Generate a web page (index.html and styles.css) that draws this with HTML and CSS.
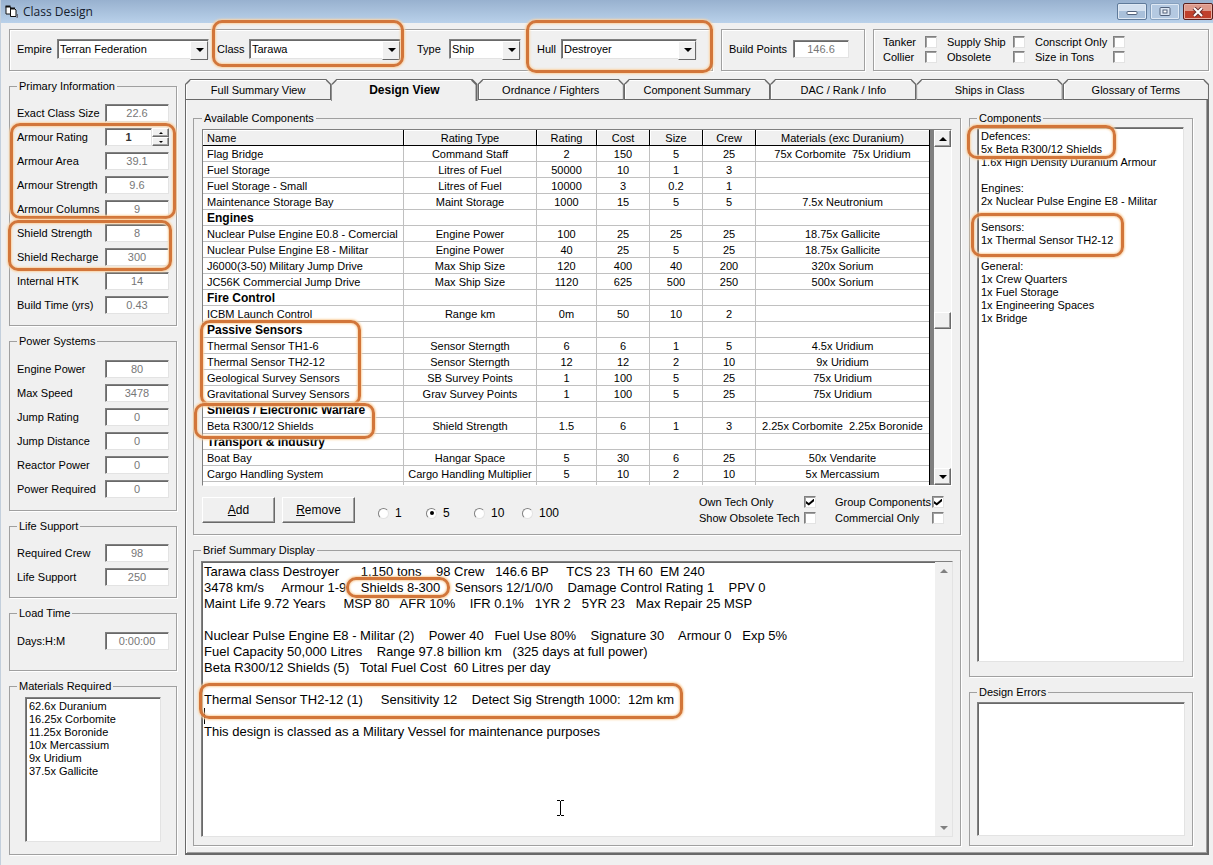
FILE: index.html
```html
<!DOCTYPE html>
<html lang="en">
<head>
<meta charset="utf-8">
<title>Class Design</title>
<link rel="stylesheet" href="styles.css">
</head>
<body>

<header class="titlebar">
  <svg class="app-icon" width="13" height="13" viewBox="0 0 13 13">
    <path d="M1 1.5h4l1 1.500v6H1z" fill="#fff" stroke="#111"/>
    <path d="M5.500 3.500h4l1.500 1.500v6.500H5.500z" fill="#fff" stroke="#111"/>
    <path d="M0.500 1.500h5M5 3.500h5" stroke="#111" stroke-width="2"/>
    <path d="M12.500 9v3.500h-1" stroke="#667" fill="none"/>
  </svg>
  <h1>Class Design</h1>
  <div class="window-buttons">
    <button class="win-btn" aria-label="Minimize">
      <svg width="12" height="9" viewBox="0 0 12 9"><rect x="1" y="4.500" width="10" height="3" rx="1" fill="#fff" stroke="#50607a"/></svg>
    </button>
    <button class="win-btn dim" aria-label="Maximize">
      <svg width="12" height="9" viewBox="0 0 12 9"><rect x="1" y="0.500" width="10" height="8" rx="1" fill="#dce6f2" stroke="#50607a"/><rect x="4" y="3" width="4" height="3" fill="#fff" stroke="#50607a"/></svg>
    </button>
    <button class="win-btn close" aria-label="Close">
      <svg width="12" height="10" viewBox="0 0 12 10"><path d="M2 1l8 8M10 1l-8 8" stroke="#6a3030" stroke-width="4"/><path d="M2 1l8 8M10 1l-8 8" stroke="#fff" stroke-width="2"/></svg>
    </button>
  </div>
</header>

<div class="topbar">
  <div class="frame class-bar">
    <div class="field field-empire">
      <label for="empire">Empire</label>
      <span class="combo"><select id="empire"><option>Terran Federation</option></select></span>
    </div>
    <div class="field field-class">
      <label for="class">Class</label>
      <span class="combo"><select id="class"><option>Tarawa</option></select></span>
      <i class="mark mark-class"></i>
    </div>
    <div class="field field-type">
      <label for="type">Type</label>
      <span class="combo"><select id="type"><option>Ship</option></select></span>
    </div>
    <div class="field field-hull">
      <label for="hull">Hull</label>
      <span class="combo"><select id="hull"><option>Destroyer</option></select></span>
      <i class="mark mark-hull"></i>
    </div>
  </div>
  <div class="frame points-bar">
    <label for="points">Build Points</label>
    <input type="text" class="value" id="points" value="146.6" readonly>
  </div>
  <div class="frame flags-bar">
    <label class="check">Tanker <input type="checkbox"></label>
    <label class="check">Supply Ship <input type="checkbox"></label>
    <label class="check">Conscript Only <input type="checkbox"></label>
    <label class="check">Collier <input type="checkbox"></label>
    <label class="check">Obsolete <input type="checkbox"></label>
    <label class="check">Size in Tons <input type="checkbox"></label>
  </div>
</div>

<main class="main">
  <aside class="sidebar">
    <fieldset class="primary">
      <legend>Primary Information</legend>
      <div class="row"><label for="size">Exact Class Size</label><input type="text" class="value" id="size" value="22.6" readonly></div>
      <div class="group">
        <div class="row">
          <label for="armour">Armour Rating</label>
          <div class="spinner">
            <input type="text" class="value strong" id="armour" value="1">
            <div class="spin-buttons">
              <button class="arrow up small" aria-label="Increase armour"></button>
              <button class="arrow down small" aria-label="Decrease armour"></button>
            </div>
          </div>
        </div>
        <div class="row"><label for="area">Armour Area</label><input type="text" class="value" id="area" value="39.1" readonly></div>
        <div class="row"><label for="astrength">Armour Strength</label><input type="text" class="value" id="astrength" value="9.6" readonly></div>
        <div class="row"><label for="columns">Armour Columns</label><input type="text" class="value" id="columns" value="9" readonly></div>
        <i class="mark mark-armour"></i>
      </div>
      <div class="group">
        <div class="row"><label for="sstrength">Shield Strength</label><input type="text" class="value" id="sstrength" value="8" readonly></div>
        <div class="row"><label for="recharge">Shield Recharge</label><input type="text" class="value" id="recharge" value="300" readonly></div>
        <i class="mark mark-shield"></i>
      </div>
      <div class="row"><label for="htk">Internal HTK</label><input type="text" class="value" id="htk" value="14" readonly></div>
      <div class="row"><label for="build">Build Time (yrs)</label><input type="text" class="value" id="build" value="0.43" readonly></div>
    </fieldset>

    <fieldset class="power">
      <legend>Power Systems</legend>
      <div class="row"><label for="epower">Engine Power</label><input type="text" class="value" id="epower" value="80" readonly></div>
      <div class="row"><label for="speed">Max Speed</label><input type="text" class="value" id="speed" value="3478" readonly></div>
      <div class="row"><label for="jrating">Jump Rating</label><input type="text" class="value" id="jrating" value="0" readonly></div>
      <div class="row"><label for="jdist">Jump Distance</label><input type="text" class="value" id="jdist" value="0" readonly></div>
      <div class="row"><label for="reactor">Reactor Power</label><input type="text" class="value" id="reactor" value="0" readonly></div>
      <div class="row"><label for="required">Power Required</label><input type="text" class="value" id="required" value="0" readonly></div>
    </fieldset>

    <fieldset class="life">
      <legend>Life Support</legend>
      <div class="row"><label for="crew">Required Crew</label><input type="text" class="value" id="crew" value="98" readonly></div>
      <div class="row"><label for="life">Life Support</label><input type="text" class="value" id="life" value="250" readonly></div>
    </fieldset>

    <fieldset class="load">
      <legend>Load Time</legend>
      <div class="row"><label for="days">Days:H:M</label><input type="text" class="value" id="days" value="0:00:00" readonly></div>
    </fieldset>

    <fieldset class="materials">
      <legend>Materials Required</legend>
      <ul class="listbox">
        <li>62.6x Duranium</li>
        <li>16.25x Corbomite</li>
        <li>11.25x Boronide</li>
        <li>10x Mercassium</li>
        <li>9x Uridium</li>
        <li>37.5x Gallicite</li>
      </ul>
    </fieldset>
  </aside>

  <section class="tabs">
    <nav class="tab-row">
      <button class="tab"><span>Full Summary View</span></button>
      <button class="tab active"><span>Design View</span></button>
      <button class="tab"><span>Ordnance / Fighters</span></button>
      <button class="tab"><span>Component Summary</span></button>
      <button class="tab"><span>DAC / Rank / Info</span></button>
      <button class="tab"><span>Ships in Class</span></button>
      <button class="tab"><span>Glossary of Terms</span></button>
    </nav>
    <div class="panel">
      <div class="column">
        <fieldset class="available">
          <legend>Available Components</legend>
          <div class="grid-box">
            <table>
              <colgroup>
                <col class="c-name"><col class="c-type"><col class="c-rating"><col class="c-num"><col class="c-num"><col class="c-num"><col>
              </colgroup>
              <thead>
                <tr><th>Name</th><th>Rating Type</th><th>Rating</th><th>Cost</th><th>Size</th><th>Crew</th><th>Materials (exc Duranium)</th></tr>
              </thead>
              <tbody>
                <tr><td>Flag Bridge</td><td>Command Staff</td><td>2</td><td>150</td><td>5</td><td>25</td><td>75x Corbomite&nbsp; 75x Uridium</td></tr>
                <tr><td>Fuel Storage</td><td>Litres of Fuel</td><td>50000</td><td>10</td><td>1</td><td>3</td><td></td></tr>
                <tr><td>Fuel Storage - Small</td><td>Litres of Fuel</td><td>10000</td><td>3</td><td>0.2</td><td>1</td><td></td></tr>
                <tr><td>Maintenance Storage Bay</td><td>Maint Storage</td><td>1000</td><td>15</td><td>5</td><td>5</td><td>7.5x Neutronium</td></tr>
                <tr class="head"><td>Engines</td><td></td><td></td><td></td><td></td><td></td><td></td></tr>
                <tr><td>Nuclear Pulse Engine E0.8 - Comercial</td><td>Engine Power</td><td>100</td><td>25</td><td>25</td><td>25</td><td>18.75x Gallicite</td></tr>
                <tr><td>Nuclear Pulse Engine E8 - Militar</td><td>Engine Power</td><td>40</td><td>25</td><td>5</td><td>25</td><td>18.75x Gallicite</td></tr>
                <tr><td>J6000(3-50) Military Jump Drive</td><td>Max Ship Size</td><td>120</td><td>400</td><td>40</td><td>200</td><td>320x Sorium</td></tr>
                <tr><td>JC56K Commercial Jump Drive</td><td>Max Ship Size</td><td>1120</td><td>625</td><td>500</td><td>250</td><td>500x Sorium</td></tr>
                <tr class="head"><td>Fire Control</td><td></td><td></td><td></td><td></td><td></td><td></td></tr>
                <tr><td>ICBM Launch Control</td><td>Range km</td><td>0m</td><td>50</td><td>10</td><td>2</td><td></td></tr>
                <tr class="head"><td>Passive Sensors<i class="mark mark-passive"></i></td><td></td><td></td><td></td><td></td><td></td><td></td></tr>
                <tr><td>Thermal Sensor TH1-6</td><td>Sensor Sterngth</td><td>6</td><td>6</td><td>1</td><td>5</td><td>4.5x Uridium</td></tr>
                <tr><td>Thermal Sensor TH2-12</td><td>Sensor Sterngth</td><td>12</td><td>12</td><td>2</td><td>10</td><td>9x Uridium</td></tr>
                <tr><td>Geological Survey Sensors</td><td>SB Survey Points</td><td>1</td><td>100</td><td>5</td><td>25</td><td>75x Uridium</td></tr>
                <tr><td>Gravitational Survey Sensors</td><td>Grav Survey Points</td><td>1</td><td>100</td><td>5</td><td>25</td><td>75x Uridium</td></tr>
                <tr class="head"><td>Shields / Electronic Warfare</td><td></td><td></td><td></td><td></td><td></td><td></td></tr>
                <tr><td>Beta R300/12 Shields<i class="mark mark-beta"></i></td><td>Shield Strength</td><td>1.5</td><td>6</td><td>1</td><td>3</td><td>2.25x Corbomite&nbsp; 2.25x Boronide</td></tr>
                <tr class="head"><td>Transport &amp; Industry</td><td></td><td></td><td></td><td></td><td></td><td></td></tr>
                <tr><td>Boat Bay</td><td>Hangar Space</td><td>5</td><td>30</td><td>6</td><td>25</td><td>50x Vendarite</td></tr>
                <tr><td>Cargo Handling System</td><td>Cargo Handling Multiplier</td><td>5</td><td>10</td><td>2</td><td>10</td><td>5x Mercassium</td></tr>
                <tr class="cut"><td></td><td></td><td></td><td></td><td></td><td></td><td></td></tr>
              </tbody>
            </table>
            <div class="scrollbar">
              <button class="arrow up" aria-label="Scroll up"></button>
              <div class="track-above"></div>
              <div class="thumb"></div>
              <div class="track-below"></div>
              <button class="arrow down" aria-label="Scroll down"></button>
            </div>
          </div>
          <div class="toolbar">
            <button class="btn"><u>A</u>dd</button>
            <button class="btn"><u>R</u>emove</button>
            <div class="radios">
              <label><input type="radio" name="amount"> 1</label>
              <label><input type="radio" name="amount" checked> 5</label>
              <label><input type="radio" name="amount"> 10</label>
              <label><input type="radio" name="amount"> 100</label>
            </div>
            <div class="options">
              <label class="check">Own Tech Only <input type="checkbox" checked></label>
              <label class="check">Group Components <input type="checkbox" checked></label>
              <label class="check">Show Obsolete Tech <input type="checkbox"></label>
              <label class="check">Commercial Only <input type="checkbox"></label>
            </div>
          </div>
        </fieldset>

        <fieldset class="summary">
          <legend>Brief Summary Display</legend>
          <div class="summary-box">
            <textarea aria-label="Brief Summary Display">Tarawa class Destroyer      1,150 tons    98 Crew   146.6 BP     TCS 23  TH 60  EM 240
3478 km/s     Armour 1-9    Shields 8-300    Sensors 12/1/0/0    Damage Control Rating 1    PPV 0
Maint Life 9.72 Years     MSP 80   AFR 10%    IFR 0.1%   1YR 2   5YR 23   Max Repair 25 MSP

Nuclear Pulse Engine E8 - Militar (2)    Power 40   Fuel Use 80%    Signature 30    Armour 0   Exp 5%
Fuel Capacity 50,000 Litres    Range 97.8 billion km   (325 days at full power)
Beta R300/12 Shields (5)   Total Fuel Cost  60 Litres per day

Thermal Sensor TH2-12 (1)     Sensitivity 12    Detect Sig Strength 1000:  12m km

This design is classed as a Military Vessel for maintenance purposes</textarea>
            <div class="scrollbar off">
              <button class="arrow up" aria-label="Scroll up" disabled></button>
              <button class="arrow down" aria-label="Scroll down" disabled></button>
            </div>
            <i class="mark mark-rating"></i>
            <i class="mark mark-thermal"></i>
            <i class="caret"></i>
            <svg class="ibeam" width="7" height="16" viewBox="0 0 7 16"><path d="M0 .5h3M4 .5h3M3.500 1v14M0 15.500h3M4 15.500h3" stroke="#000" fill="none"/></svg>
          </div>
        </fieldset>
      </div>

      <div class="column">
        <fieldset class="components">
          <legend>Components</legend>
          <ul class="listbox">
            <li class="anchor">Defences:<i class="mark mark-defences"></i></li>
            <li>5x Beta R300/12 Shields</li>
            <li>1.6x High Density Duranium Armour</li>
            <li class="gap">Engines:</li>
            <li>2x Nuclear Pulse Engine E8 - Militar</li>
            <li class="gap anchor">Sensors:<i class="mark mark-sensors"></i></li>
            <li>1x Thermal Sensor TH2-12</li>
            <li class="gap">General:</li>
            <li>1x Crew Quarters</li>
            <li>1x Fuel Storage</li>
            <li>1x Engineering Spaces</li>
            <li>1x Bridge</li>
          </ul>
        </fieldset>
        <fieldset class="errors">
          <legend>Design Errors</legend>
          <ul class="listbox"></ul>
        </fieldset>
      </div>
    </div>
  </section>
</main>

</body>
</html>
```

FILE: styles.css
```css
* {
  box-sizing: border-box;
}

body {
  margin: 0;
  min-height: 100vh;
  display: flex;
  flex-direction: column;
  background-color: #f0f0f0;
  border-left: 1px solid #c3cfdc;
  color: #000;
  font-family: "Liberation Sans", Arial, sans-serif;
  font-size: 11px;
  line-height: 14px;
}

button, input, select, textarea {
  font: inherit;
  color: inherit;
  margin: 0;
  padding: 0;
  border-radius: 0;
}

label {
  white-space: nowrap;
}

/* title bar */
.titlebar {
  display: flex;
  align-items: center;
  height: 23px;
  padding: 0 0 0 4px;
  overflow: hidden;
  background: linear-gradient(#98b1cf, #b9d1ea);
}

.titlebar h1 {
  flex: 1;
  margin: 0 0 0 5px;
  font: 12px/20px "Open Sans", "Noto Sans", sans-serif;
  color: #14202e;
}

.window-buttons {
  display: flex;
  gap: 3px;
}

.win-btn {
  display: flex;
  align-items: center;
  justify-content: center;
  width: 30px;
  height: 17px;
  border: 1px solid #5f7a9a;
  border-radius: 2px;
  background: linear-gradient(#d3e0ef 50%, #a9c0da 50%);
  box-shadow: inset 0 0 0 1px #dfe9f4;
}

.win-btn.dim {
  border-color: #86a0be;
  background: #b4c9e1;
}

.win-btn.close {
  border-color: #5a1f1c;
  background: linear-gradient(#dd9a8c 50%, #c0402c 50%);
  box-shadow: inset 0 0 0 1px #e8b0a5;
}

/* top frames */
.topbar {
  display: grid;
  grid-template-columns: 704fr 144fr 336fr;
  gap: 8px;
  padding: 6px 4px 8px 8px;
}

.frame {
  height: 42px;
  padding-bottom: 2px;
  border: 1px solid #a0a0a0;
  box-shadow: 1px 1px 0 #fff, inset 1px 1px 0 #fff;
  display: flex;
  align-items: center;
}

.class-bar {
  padding-left: 7px;
  padding-right: 15px;
}

.field {
  position: relative;
  display: flex;
  align-items: center;
}

.field-empire { flex: 192; }
.field-class { flex: 184; margin-left: 8px; }
.field-type { flex: 104; margin-left: 16px; }
.field-hull { flex: 160; margin-left: 16px; }

.field label { width: 32px; }
.field-empire label { width: 40px; }
.field-hull label { width: 24px; }

.combo {
  position: relative;
  flex: 1;
}

.combo select {
  appearance: none;
  display: block;
  width: 100%;
  height: 20px;
  padding: 0 18px 0 2px;
  border: 1px solid;
  border-color: #808080 #e3e3e3 #e3e3e3 #808080;
  box-shadow: inset 1px 1px 0 #696969;
  background: #fff;
}

.combo::before {
  content: "";
  position: absolute;
  top: 2px;
  right: 1px;
  width: 16px;
  height: 17px;
  background: #f0f0f0;
  border: 1px solid;
  border-color: #fff #696969 #696969 #fff;
  pointer-events: none;
}

.combo::after {
  content: "";
  position: absolute;
  top: 9px;
  right: 5px;
  border: 4px solid transparent;
  border-top-color: #000;
  border-bottom: 0;
  pointer-events: none;
}

.points-bar {
  justify-content: space-between;
  padding-left: 7px;
  padding-right: 15px;
}

.value {
  width: 64px;
  height: 18px;
  text-align: center;
  color: #777;
  background: #fff;
  border: 1px solid;
  border-color: #808080 #e3e3e3 #e3e3e3 #808080;
  box-shadow: inset 1px 1px 0 #696969;
}

.points-bar .value {
  width: 56px;
}

.value.strong {
  width: 47px;
  color: #333;
  font-weight: bold;
}

.flags-bar {
  display: grid;
  grid-template-columns: 54px 78px 90px;
  column-gap: 10px;
  align-content: center;
  padding-left: 9px;
}

.check {
  display: flex;
  align-items: center;
  justify-content: space-between;
  height: 15px;
}

input[type="checkbox"] {
  appearance: none;
  display: grid;
  place-items: center;
  width: 12px;
  height: 12px;
  background: #fff;
  border: 1px solid;
  border-color: #808080 #e3e3e3 #e3e3e3 #808080;
  box-shadow: inset 1px 1px 0 #a0a0a0;
}

input[type="checkbox"]:checked::before {
  content: "";
  width: 8px;
  height: 7px;
  background: #000;
  clip-path: polygon(0 35%, 35% 65%, 100% 0, 100% 38%, 35% 100%, 0 72%);
}

/* group boxes */
.main {
  flex: 1;
  display: flex;
  gap: 8px;
  padding: 0 4px 10px 8px;
}

fieldset {
  min-width: 0;
  margin: 0;
  padding: 4px 7px 8px;
  border: 1px solid #a0a0a0;
  box-shadow: 1px 1px 0 #fff;
}

legend {
  padding: 0 2px;
}

.sidebar {
  flex: none;
  width: 168px;
  display: flex;
  flex-direction: column;
  gap: 8px;
}

.sidebar fieldset {
  display: flex;
  flex-direction: column;
  gap: 6px;
}

.sidebar .primary { padding: 11px 7px; }
.sidebar .power { padding: 12px 7px; }
.sidebar .life { padding: 11px 7px; }
.sidebar .load { padding: 12px 7px 20px; }

.sidebar .materials {
  flex: 1;
  padding: 4px 15px 12px;
}

.sidebar .materials legend {
  margin-left: -8px;
}

.row {
  display: flex;
  align-items: center;
  justify-content: space-between;
  height: 18px;
}

.group {
  position: relative;
  display: flex;
  flex-direction: column;
  gap: 6px;
}

.spinner {
  display: flex;
  width: 64px;
}

.spin-buttons {
  display: flex;
  flex-direction: column;
  width: 17px;
}

.arrow {
  display: flex;
  align-items: center;
  justify-content: center;
  width: 17px;
  height: 17px;
  background: #f0f0f0;
  border: 1px solid;
  border-color: #fff #696969 #696969 #fff;
  box-shadow: inset -1px -1px 0 #a0a0a0;
}

.arrow::before {
  content: "";
  border: 4px solid transparent;
}

.arrow.up::before { border-top: 0; border-bottom-color: #000; }
.arrow.down::before { border-bottom: 0; border-top-color: #000; }

.arrow.small { height: 9px; }
.arrow.small::before { border-width: 2px; }
.arrow.small.up::before { border-top: 0; }
.arrow.small.down::before { border-bottom: 0; }

.listbox {
  flex: 1;
  margin: 0;
  padding: 2px 3px;
  list-style: none;
  line-height: 13px;
  white-space: nowrap;
  background: #fff;
  border: 1px solid;
  border-color: #808080 #e3e3e3 #e3e3e3 #808080;
  box-shadow: inset 1px 1px 0 #696969;
}

.listbox .gap {
  margin-top: 13px;
}

.listbox .anchor {
  position: relative;
}

/* tabs */
.tabs {
  flex: 1;
  min-width: 0;
  display: flex;
  flex-direction: column;
}

.tab-row {
  display: flex;
  height: 21px;
}

.tab {
  position: relative;
  z-index: 0;
  flex: 1;
  border: 0;
  background: #696969;
  clip-path: polygon(0 5px, 5px 0, calc(100% - 5px) 0, 100% 5px, 100% 100%, 0 100%);
}

.tab::before {
  content: "";
  position: absolute;
  z-index: -1;
  inset: 1px;
  background: #f0f0f0;
  box-shadow: inset 1px 1px 0 #fff;
  clip-path: polygon(0 5px, 5px 0, calc(100% - 5px) 0, 100% 5px, 100% 100%, 0 100%);
}

.tab.active {
  height: 22px;
  font-size: 12px;
  font-weight: bold;
}

.tab.active::before {
  inset: 1px 2px 0 1px;
}

.panel {
  flex: 1;
  display: grid;
  grid-template-columns: 768fr 224fr;
  gap: 8px;
  padding: 11px 14px 7px 7px;
  border: 1px solid #696969;
  border-width: 0 2px 2px 1px;
  box-shadow: inset 1px 0 0 #fff, inset -1px -1px 0 #a0a0a0;
}

.column {
  min-width: 0;
  display: flex;
  flex-direction: column;
  gap: 8px;
}

/* component table */
.available {
  padding: 4px 8px 8px;
}

.grid-box {
  display: flex;
  border: 1px solid;
  border-color: #808080 #fff #fff #808080;
  background: #808080;
}

table {
  flex: 1;
  table-layout: fixed;
  border-collapse: separate;
  border-spacing: 0;
  margin-right: 4px;
  background: #fff;
  border-right: 1px solid #000;
}

.c-name { width: 201px; }
.c-type { width: 133px; }
.c-rating { width: 60px; }
.c-num { width: 53px; }

th, td {
  height: 16px;
  padding: 1px 0 0;
  line-height: 14px;
  text-align: center;
  white-space: nowrap;
  border-right: 1px solid #c0c0c0;
  border-bottom: 1px solid #c0c0c0;
}

th {
  font-weight: normal;
  background: #f0f0f0;
  border-color: #000;
  box-shadow: inset 1px 1px 0 #fff;
}

th:first-child, td:first-child {
  position: relative;
  padding-left: 4px;
  text-align: left;
}

th:last-child, td:last-child {
  border-right: 0;
}

.head td {
  font-size: 12px;
  font-weight: bold;
}

.cut td {
  height: 3px;
  border-bottom: 0;
}

.scrollbar {
  flex: none;
  width: 17px;
  display: flex;
  flex-direction: column;
  background: #f6f6f6;
}

.thumb {
  height: 17px;
  background: #f0f0f0;
  border: 1px solid;
  border-color: #fff #696969 #696969 #fff;
  box-shadow: inset -1px -1px 0 #a0a0a0;
}

.track-above { flex: 165; }
.track-below { flex: 139; }

.scrollbar.off {
  justify-content: space-between;
  background: #f0f0f0;
}

.scrollbar.off .arrow {
  border-color: transparent;
  box-shadow: none;
}

.scrollbar.off .up::before { border-bottom-color: #808080; }
.scrollbar.off .down::before { border-top-color: #808080; }

.toolbar {
  display: flex;
  align-items: center;
  gap: 7px;
  margin-top: 8px;
  padding-right: 8px;
}

.btn {
  width: 73px;
  height: 26px;
  font-size: 12px;
  background: #f0f0f0;
  border: 1px solid;
  border-color: #fff #696969 #696969 #fff;
  box-shadow: inset -1px -1px 0 #a0a0a0;
}

.radios {
  display: flex;
  margin-left: 16px;
  padding-top: 6px;
}

.radios label {
  display: flex;
  align-items: center;
  gap: 6px;
  width: 48px;
  font-size: 12px;
}

input[type="radio"] {
  appearance: none;
  display: grid;
  place-items: center;
  width: 11px;
  height: 11px;
  border-radius: 50%;
  background: #fff;
  border: 1px solid;
  border-color: #808080 #e3e3e3 #e3e3e3 #808080;
}

input[type="radio"]:checked::before {
  content: "";
  width: 4px;
  height: 4px;
  border-radius: 50%;
  background: #000;
}

.options {
  display: grid;
  grid-template-columns: 117px 109px;
  column-gap: 19px;
  margin-left: auto;
}

.options .check {
  height: 16px;
}

/* summary */
.summary {
  flex: 1;
  display: flex;
}

.summary-box {
  position: relative;
  flex: 1;
  display: flex;
  border: 1px solid;
  border-color: #808080 #e3e3e3 #e3e3e3 #808080;
  box-shadow: inset 1px 1px 0 #696969;
}

.summary textarea {
  flex: 1;
  margin: 1px 0 0 1px;
  border: 0;
  resize: none;
  outline: none;
  overflow: hidden;
  white-space: pre;
  font-size: 13px;
  line-height: 16px;
  padding: 1px 0 0 1px;
}

.caret {
  position: absolute;
  left: 2px;
  top: 146px;
  width: 1px;
  height: 16px;
  background: #000;
}

.ibeam {
  position: absolute;
  left: 355px;
  top: 238px;
}

.components, .errors {
  display: flex;
}

.components {
  flex: 1;
  padding: 2px 8px 14px 7px;
}

.errors {
  padding: 3px 7px 9px;
}

.errors .listbox {
  min-height: 134px;
}

/* highlighter rings */
.mark {
  position: absolute;
  z-index: 2;
  border: 3px solid #d2763a;
  border-radius: 10px;
  box-shadow: 0 0 2px 1px #fbd3a4, inset 0 0 2px 1px #fbd3a4;
  pointer-events: none;
}

.mark-class { inset: -19px -3px -8px -5px; }
.mark-hull { inset: -19px -16px -14px -11px; }
.mark-armour { inset: -5px -7px -1px -7px; }
.mark-shield { inset: -4px -3px -5px -9px; }
.mark-passive { left: -3px; top: -2px; width: 161px; height: 86px; }
.mark-beta { left: -9px; top: -15px; width: 181px; height: 36px; }
.mark-defences { left: -14px; top: -5px; width: 149px; height: 34px; }
.mark-sensors { left: -10px; top: -8px; width: 153px; height: 44px; }
.mark-rating { left: 144px; top: 15px; width: 104px; height: 21px; }
.mark-thermal { left: -3px; top: 121px; width: 484px; height: 36px; }
```
